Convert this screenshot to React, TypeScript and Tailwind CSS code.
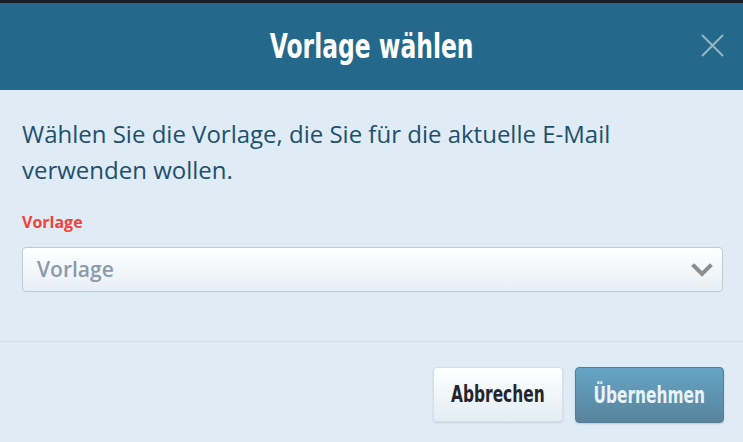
export default function App() {
  // no condensed face is installed, so the bold sans is narrowed with scale-x
  const display = { fontFamily: '"DejaVu Sans", sans-serif' };

  return (
    <div className="flex h-[442px] w-[743px] flex-col overflow-hidden bg-[#dfecf6] font-['Open_Sans',sans-serif]">
      <div className="h-[3px] bg-[#1d1c2a]" />

      <header className="relative flex h-[87px] items-center justify-center bg-[#24698b]">
        <h1
          className="inline-block origin-center scale-x-[0.71] text-[33px] font-bold leading-none text-white"
          style={display}
        >
          Vorlage wählen
        </h1>
        <button className="absolute right-[19px] top-[30px] flex h-[24px] w-[24px] items-center justify-center text-[#93b6c9]">
          <svg width="23" height="23" viewBox="0 0 23 23" fill="none" stroke="currentColor" strokeWidth="2">
            <path d="M1 1 L22 22 M22 1 L1 22" />
          </svg>
        </button>
      </header>

      <div className="flex flex-col pl-[22px] pr-[20px] pt-[26px]">
        <p className="text-[24px] leading-[36px] text-[#1e4f6d]">
          Wählen Sie die Vorlage, die Sie für die aktuelle E-Mail verwenden wollen.
        </p>

        <label className="mt-[23px] text-[16px] font-bold leading-[22px] text-[#f2433a]">
          Vorlage
        </label>

        <div className="mt-[14px] flex h-[45px] items-center justify-between rounded-[4px] border border-[#c4c9cd] bg-gradient-to-b from-white to-[#e6eff6] pl-[14px] pr-[9px]">
          <span className="text-[21px] font-semibold text-[#8a9aaa]">Vorlage</span>
          <svg width="22" height="14" viewBox="0 0 22 14" fill="none" stroke="#8d8d8d" strokeWidth="4" strokeLinecap="square">
            <path d="M3 3 L11 11 L19 3" />
          </svg>
        </div>
      </div>

      <div className="mt-[49px] border-t border-[#d3e0e9]" />

      <div className="flex justify-end gap-[12px] pr-[19px] pt-[25px]">
        <button className="flex h-[55px] w-[130px] items-center justify-center rounded-[4px] border border-[#d4e0e8] bg-gradient-to-b from-white to-[#e2edf4] shadow-[0_1px_2px_rgba(0,0,0,0.12)]">
          <span
            className="inline-block scale-x-[0.67] text-[23px] font-bold text-[#23252a]"
            style={display}
          >
            Abbrechen
          </span>
        </button>
        <button className="flex h-[56px] w-[149px] items-center justify-center rounded-[4px] border border-[#537e95] bg-gradient-to-b from-[#65a5c6] to-[#58839b] shadow-[0_1px_2px_rgba(0,0,0,0.15)]">
          <span
            className="inline-block scale-x-[0.67] text-[23px] font-bold text-[#eaf3f8]"
            style={display}
          >
            Übernehmen
          </span>
        </button>
      </div>
    </div>
  );
}
